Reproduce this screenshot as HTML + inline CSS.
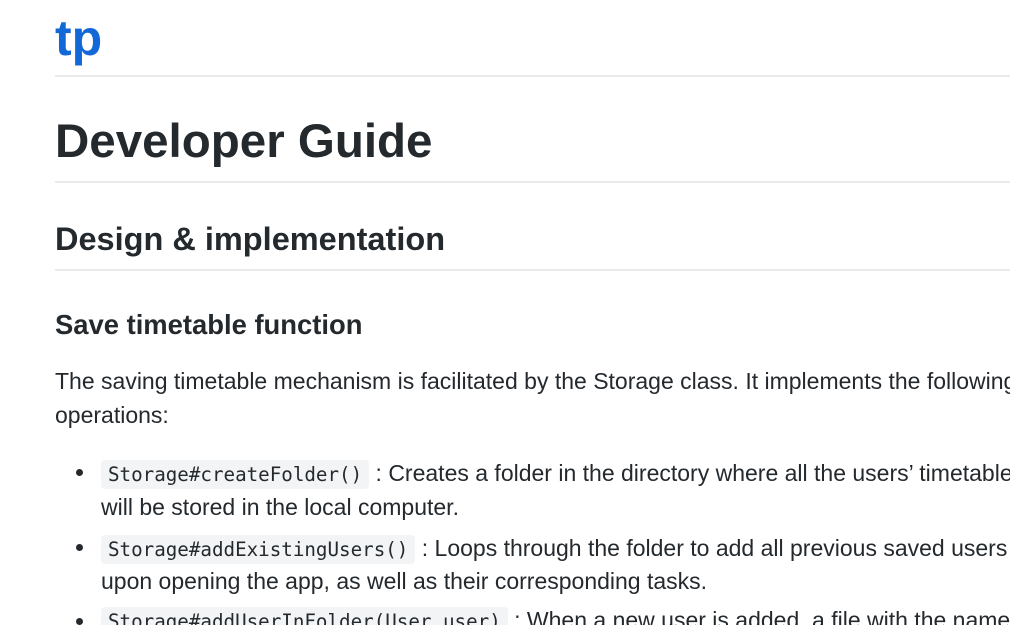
<!DOCTYPE html>
<html><head><meta charset="utf-8"><style>
html,body{margin:0;padding:0;width:1010px;height:625px;overflow:hidden;background:#fff;}
body{font-family:"Liberation Sans",sans-serif;color:#24292e;position:relative;}
.a{position:absolute;left:55px;white-space:nowrap;}
.hr{position:absolute;left:55px;right:0;height:2px;background:#e9ebed;}
code{font-family:"DejaVu Sans Mono","Liberation Mono",monospace;font-size:19.2px;background:#f3f4f5;border-radius:4px;padding:3px 7px;}
.t{font-size:23px;}
.dot{position:absolute;left:76px;width:7px;height:7px;border-radius:50%;background:#24292e;}
</style></head><body>
<div class="a" style="top:9px;font-size:50px;font-weight:bold;color:#1368d8;">tp</div>
<div class="hr" style="top:75px"></div>
<div class="a" style="top:114px;font-size:47.5px;font-weight:bold;">Developer Guide</div>
<div class="hr" style="top:181px"></div>
<div class="a" style="top:221px;font-size:32.5px;font-weight:bold;">Design &amp; implementation</div>
<div class="hr" style="top:269px"></div>
<div class="a" style="top:309px;font-size:27.4px;font-weight:bold;">Save timetable function</div>
<div class="a t" style="top:368px">The saving timetable mechanism is facilitated by the Storage class. It implements the following</div>
<div class="a t" style="top:402px">operations:</div>
<div class="dot" style="top:469px"></div>
<div class="a t" style="top:460px;left:101px"><code>Storage#createFolder()</code> : Creates a folder in the directory where all the users’ timetables</div>
<div class="a t" style="top:494px;left:101px">will be stored in the local computer.</div>
<div class="dot" style="top:544px"></div>
<div class="a t" style="top:535px;left:101px"><code>Storage#addExistingUsers()</code> : Loops through the folder to add all previous saved users</div>
<div class="a t" style="top:568px;left:101px">upon opening the app, as well as their corresponding tasks.</div>
<div class="dot" style="top:618px"></div>
<div class="a t" style="top:607px;left:101px"><code>Storage#addUserInFolder(User user)</code> : When a new user is added, a file with the name</div>
</body></html>
